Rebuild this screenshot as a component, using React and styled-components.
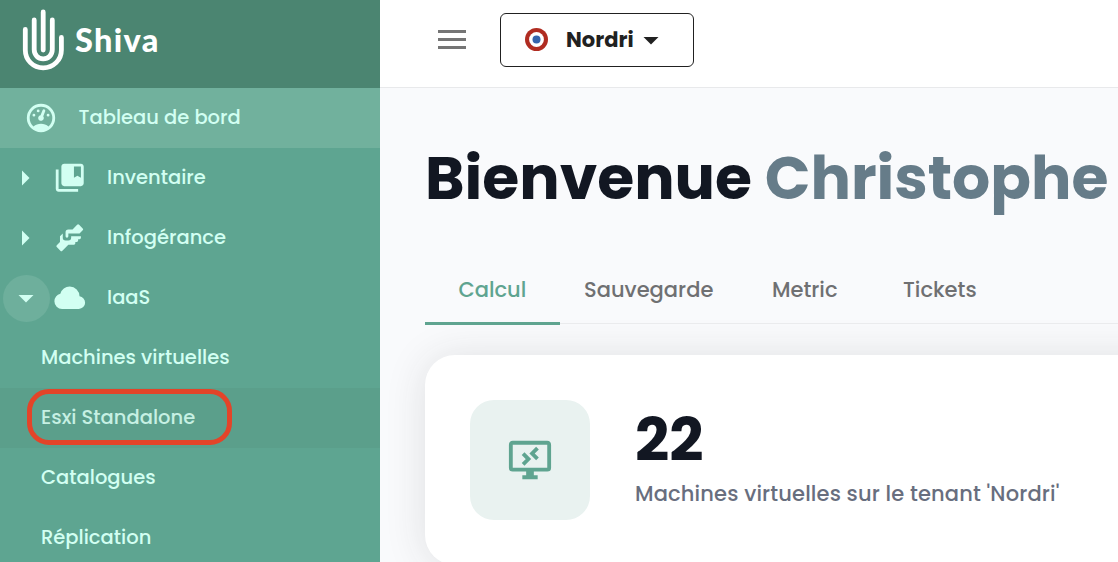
import React from "react";
import styled, { createGlobalStyle } from "styled-components";

const GlobalStyle = createGlobalStyle`
  *, *::before, *::after { box-sizing: border-box; }
  html, body { margin: 0; padding: 0; }
  body {
    font-family: Poppins, Inter, "Liberation Sans", sans-serif;
    -webkit-font-smoothing: antialiased;
    overflow: hidden;
  }
`;

const Page = styled.div`
  display: flex;
  width: 100%;
  height: 100vh;
  overflow: hidden;
  background: #f9fafc;
`;

const Sidebar = styled.aside`
  flex: 0 0 380px;
  height: 100%;
  overflow: hidden;
  background: #5ea591;
  color: #d2fff2;
`;

const Brand = styled.div`
  display: flex;
  align-items: center;
  height: 88px;
  padding: 0 0 8px 22px;
  gap: 11px;
  background: #4b8571;
  color: #fff;
`;

const BrandName = styled.span`
  font-family: Lato, "Liberation Sans", sans-serif;
  font-size: 32.5px;
  font-weight: 900;
  line-height: 40px;
  letter-spacing: 1.3px;
`;

const NavRow = styled.div`
  display: flex;
  align-items: center;
  height: 60px;
  padding-left: ${(p) => p.$indent}px;
  background: ${(p) => (p.$tone === "active" ? "#71b19d" : p.$tone === "hover" ? "#5b9f8b" : "transparent")};
  color: ${(p) => (p.$tone === "hover" ? "#c6f0e3" : "inherit")};
`;

const NavLabel = styled.span`
  margin-left: ${(p) => p.$offset || 0}px;
  padding-bottom: 1px;
  font-size: 19.5px;
  font-weight: 500;
  line-height: 30px;
  white-space: nowrap;
`;

const Toggle = styled.span`
  display: flex;
  align-items: center;
  justify-content: center;
  width: 47px;
  height: 47px;
  margin-right: 3.5px;
  padding-right: ${(p) => (p.$open ? 0 : 2)}px;
  border-radius: 50%;
  background: ${(p) => (p.$open ? "#6eaf9c" : "transparent")};
`;

const Glyph = styled.svg`
  display: block;
  flex: none;
  width: ${(p) => p.$size}px;
  height: ${(p) => p.$size}px;
  fill: currentColor;
`;

const SelectedSlot = styled.div`
  position: relative;
`;

const Ring = styled.div`
  position: absolute;
  left: 27px;
  top: 1px;
  width: 205px;
  height: 56px;
  border: 5px solid #e34429;
  border-radius: 22px;
`;

const Main = styled.main`
  flex: 1;
  min-width: 0;
  height: 100%;
  overflow: hidden;
`;

const TopBar = styled.header`
  display: flex;
  align-items: center;
  gap: 34px;
  height: 88px;
  padding: 0 0 8px 58px;
  background: #fff;
  border-bottom: 1px solid #e8e9eb;
`;

const MenuButton = styled.div`
  display: flex;
  flex-direction: column;
  gap: 5px;
  width: 28px;
  margin-top: -1px;
`;

const MenuLine = styled.span`
  height: 3px;
  background: #757575;
`;

const TenantButton = styled.div`
  display: flex;
  align-items: center;
  width: 194px;
  height: 54px;
  margin-top: 1px;
  padding-left: 24px;
  border: 1px solid #212121;
  border-radius: 6px;
  color: #212121;
`;

const TenantName = styled.span`
  margin: 0 -1px 0 17px;
  padding-bottom: 2px;
  font-size: 21px;
  font-weight: 700;
  white-space: nowrap;
`;

const Content = styled.div`
  padding: 45px 0 0 45px;
`;

const Title = styled.h1`
  margin: 0;
  height: 90px;
  font-size: 60px;
  font-weight: 700;
  line-height: 90px;
  color: #121722;
  white-space: nowrap;
`;

const UserName = styled.span`
  color: #667c89;
`;

const Tabs = styled.div`
  display: flex;
  box-sizing: content-box;
  height: 70px;
  margin-top: 30px;
  border-bottom: 1px solid #ebecee;
`;

const Tab = styled.div`
  flex: 0 0 ${(p) => p.$width}px;
  height: ${(p) => (p.$active ? 72 : 70)}px;
  padding: 22px 0 0 ${(p) => p.$pad}px;
  border-bottom: ${(p) => (p.$active ? "3px solid #5fa490" : "none")};
  font-size: 21px;
  font-weight: 500;
  line-height: 30px;
  color: ${(p) => (p.$active ? "#5fa490" : "#6f7072")};
  white-space: nowrap;
`;

const Card = styled.section`
  display: flex;
  gap: 45px;
  width: 760px;
  height: 210px;
  margin-top: 31px;
  padding: 45px;
  border-radius: 30px;
  background: #fff;
  box-shadow: 0 2px 40px rgba(50, 50, 50, 0.13);
`;

const IconTile = styled.div`
  display: flex;
  align-items: center;
  justify-content: center;
  width: 120px;
  height: 120px;
  border-radius: 24px;
  background: #e9f2f0;
  color: #5fa490;
`;

const Stat = styled.div`
  display: flex;
  flex-direction: column;
`;

const StatValue = styled.strong`
  height: 79px;
  font-size: 60px;
  font-weight: 700;
  line-height: 81px;
  color: #121722;
`;

const StatLabel = styled.span`
  font-size: 21px;
  font-weight: 500;
  line-height: 30px;
  letter-spacing: 0.15px;
  color: #686e7e;
  white-space: nowrap;
`;

const gaugePath =
  "M12,2A10,10 0 0,0 2,12A10,10 0 0,0 12,22A10,10 0 0,0 22,12A10,10 0 0,0 12,2M12,4A8,8 0 0,1 20,12C20,14.4 19,16.5 17.3,18C15.9,16.7 14,16 12,16C10,16 8.2,16.7 6.7,18C5,16.5 4,14.4 4,12A8,8 0 0,1 12,4M14,5.89C13.62,5.9 13.26,6.15 13.1,6.54L11.81,9.77L11.71,10C11,10.13 10.41,10.6 10.14,11.26C9.73,12.29 10.23,13.45 11.26,13.86C12.29,14.27 13.45,13.77 13.86,12.74C14.12,12.08 14,11.32 13.57,10.76L13.67,10.5L14.96,7.29L14.97,7.26C15.17,6.75 14.92,6.17 14.41,5.96C14.28,5.91 14.15,5.89 14,5.89M10,6A1,1 0 0,0 9,7A1,1 0 0,0 10,8A1,1 0 0,0 11,7A1,1 0 0,0 10,6M7,9A1,1 0 0,0 6,10A1,1 0 0,0 7,11A1,1 0 0,0 8,10A1,1 0 0,0 7,9M17,9A1,1 0 0,0 16,10A1,1 0 0,0 17,11A1,1 0 0,0 18,10A1,1 0 0,0 17,9Z";
const collectionPath =
  "M4 6H2v14c0 1.1.9 2 2 2h14v-2H4V6m16-4H8c-1.1 0-2 .9-2 2v12c0 1.1.9 2 2 2h12c1.1 0 2-.9 2-2V4c0-1.1-.9-2-2-2m0 10l-2.5-1.5L15 12V4h5v8z";
const handshakePath =
  "M11 6H14L17.29 2.7A1 1 0 0 1 18.71 2.7L21.29 5.29A1 1 0 0 1 21.29 6.7L19 9H11V11A1 1 0 0 1 10 12A1 1 0 0 1 9 11V8A2 2 0 0 1 11 6M5 11V15L2.71 17.29A1 1 0 0 0 2.71 18.71L5.29 21.29A1 1 0 0 0 6.71 21.29L11 17H15A1 1 0 0 0 16 16V15H17A1 1 0 0 0 18 14V13H19A1 1 0 0 0 20 12V11H13V12A2 2 0 0 1 11 14H9A2 2 0 0 1 7 12V9Z";
const cloudPath =
  "M6.5 20Q4.22 20 2.61 18.43 1 16.85 1 14.58 1 12.63 2.17 11.1 3.35 9.57 5.25 9.15 5.88 6.85 7.75 5.43 9.63 4 12 4 14.93 4 16.96 6.04 19 8.07 19 11 20.73 11.2 21.86 12.5 23 13.78 23 15.5 23 17.38 21.69 18.69 20.38 20 18.5 20Z";

const sections = [
  { label: "Inventaire", icon: collectionPath },
  { label: "Infogérance", icon: handshakePath },
  { label: "IaaS", icon: cloudPath, open: true },
];

function HandLogo() {
  return (
    <svg width="42" height="62" viewBox="0 0 42 62" fill="none" stroke="#fff" strokeWidth="4.8" strokeLinecap="round">
      <path d="M3.3 20.4V41C3.3 51 11 58.8 21.2 58.8S39.4 51 39.4 41V28.5" />
      <path d="M12.2 11V40.5C12.2 46 16 49.8 21.2 49.8S30.3 46 30.3 40.5V11" />
      <path d="M21.2 3V41" />
    </svg>
  );
}

function Caret({ down }) {
  return (
    <Glyph $size={36} viewBox="0 0 24 24">
      <path d={down ? "M7 10l5 5 5-5z" : "M10 17l5-5-5-5z"} />
    </Glyph>
  );
}

function Roundel() {
  return (
    <svg width="24" height="24" viewBox="0 0 24 24">
      <circle cx="11.5" cy="11.5" r="11.5" fill="#b02c21" />
      <circle cx="11.5" cy="11.5" r="7.4" fill="#fff" />
      <circle cx="11.5" cy="11.5" r="4" fill="#3564ad" />
    </svg>
  );
}

function RemoteScreen() {
  return (
    <Glyph $size={46} viewBox="0 0 24 24">
      <path d="M21,16H3V4H21M21,2H3C1.89,2 1,2.89 1,4V16A2,2 0 0,0 3,18H10V20H8V22H16V20H14V18H21A2,2 0 0,0 23,16V4C23,2.89 22.1,2 21,2Z" />
      <path d="M8.4 8.7L11.2 11.5L8.4 14.3M15.9 5.8L13.1 8.6L15.9 11.4" fill="none" stroke="currentColor" strokeWidth="2" />
    </Glyph>
  );
}

export default function App() {
  return (
    <Page>
      <GlobalStyle />
      <Sidebar>
        <Brand>
          <HandLogo />
          <BrandName>Shiva</BrandName>
        </Brand>
        <NavRow $tone="active" $indent={24}>
          <Glyph $size={34} viewBox="0 0 24 24"><path d={gaugePath} /></Glyph>
          <NavLabel $offset={20.5}>Tableau de bord</NavLabel>
        </NavRow>
        {sections.map((s) => (
          <NavRow key={s.label} $indent={2.5}>
            <Toggle $open={s.open}><Caret down={s.open} /></Toggle>
            <Glyph $size={33.5} viewBox="0 0 24 24"><path d={s.icon} /></Glyph>
            <NavLabel $offset={20.5}>{s.label}</NavLabel>
          </NavRow>
        ))}
        <NavRow $indent={41}><NavLabel>Machines virtuelles</NavLabel></NavRow>
        <SelectedSlot>
          <NavRow $indent={41} $tone="hover"><NavLabel>Esxi Standalone</NavLabel></NavRow>
          <Ring />
        </SelectedSlot>
        <NavRow $indent={41}><NavLabel>Catalogues</NavLabel></NavRow>
        <NavRow $indent={41}><NavLabel>Réplication</NavLabel></NavRow>
      </Sidebar>
      <Main>
        <TopBar>
          <MenuButton><MenuLine /><MenuLine /><MenuLine /></MenuButton>
          <TenantButton>
            <Roundel />
            <TenantName>Nordri</TenantName>
            <Caret down />
          </TenantButton>
        </TopBar>
        <Content>
          <Title>Bienvenue <UserName>Christophe</UserName></Title>
          <Tabs>
            <Tab $active $width={135} $pad={33.5}>Calcul</Tab>
            <Tab $width={188} $pad={24}>Sauvegarde</Tab>
            <Tab $width={131} $pad={24}>Metric</Tab>
            <Tab $width={130} $pad={24}>Tickets</Tab>
          </Tabs>
          <Card>
            <IconTile><RemoteScreen /></IconTile>
            <Stat>
              <StatValue>22</StatValue>
              <StatLabel>Machines virtuelles sur le tenant 'Nordri'</StatLabel>
            </Stat>
          </Card>
        </Content>
      </Main>
    </Page>
  );
}
